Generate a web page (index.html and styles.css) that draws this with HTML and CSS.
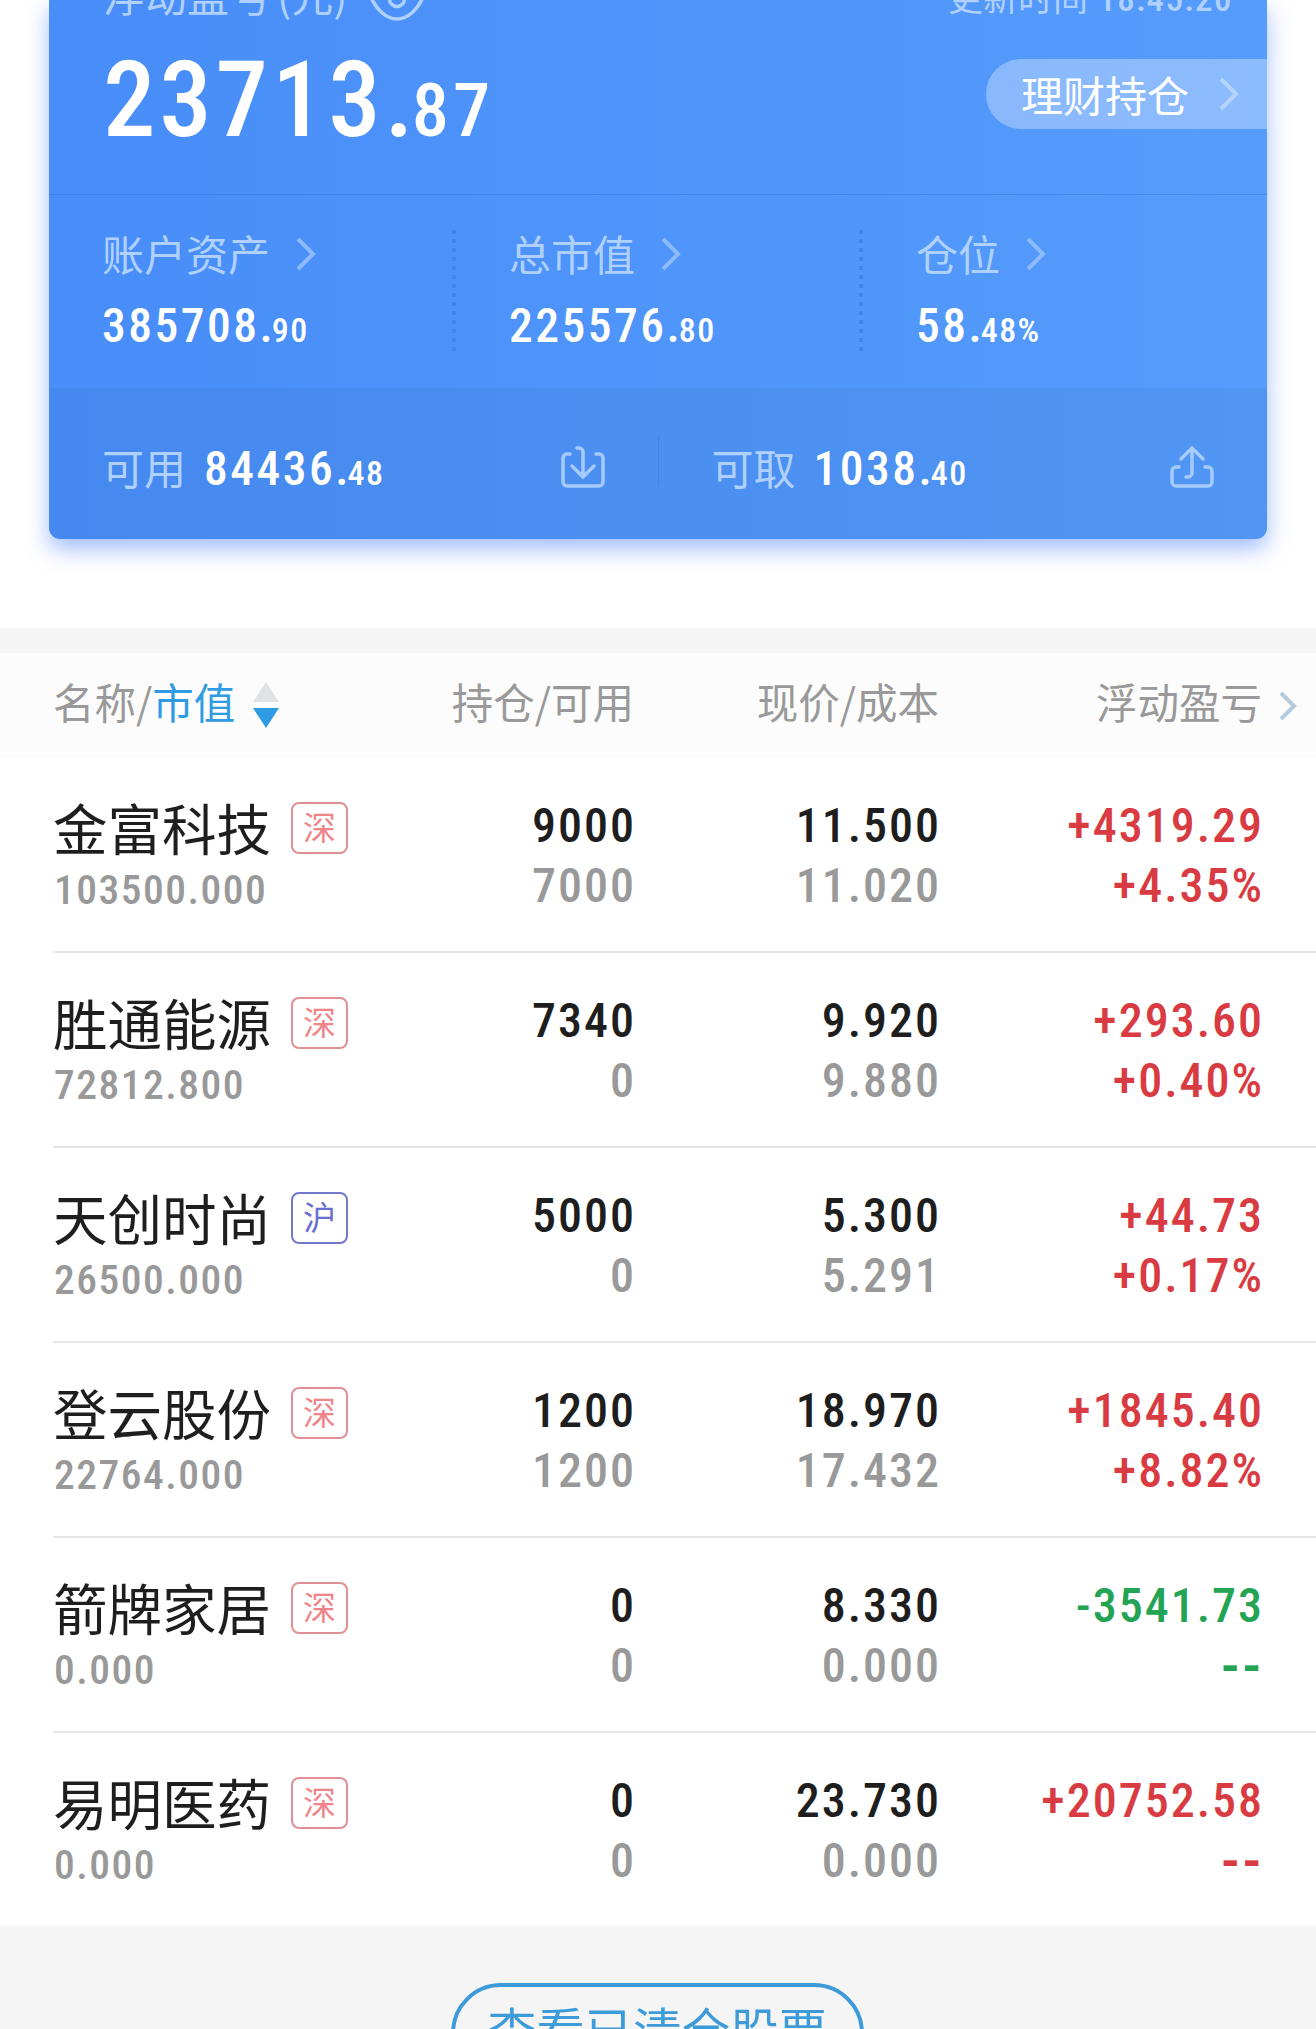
FILE: index.html
```
<!DOCTYPE html>
<html lang="zh-CN">
    <head>
        <meta charset="utf-8">
        <title>持仓</title>
        <link rel="stylesheet" href="styles.css">
    </head>
    <body>
        <div class="top">
            <div class="card">
                <div class="profit">
                    <div class="profit-left">
                        <div class="profit-title">
                            <span class="cn">浮动盈亏</span><span class="cn unit">(元)</span>
                            <svg class="eye" width="56" height="44" viewBox="0 0 56 44" fill="none" stroke="currentColor" stroke-width="3.5">
                                <path d="M2 20C7 9 17 2 28 2s21 7 26 18C49 32 39 42 28 42S7 32 2 20z"/>
                                <circle cx="28" cy="22" r="7.5"/>
                            </svg>
                        </div>
                        <div class="profit-num">23713<i>.</i><small>87</small></div>
                    </div>
                    <div class="profit-right">
                        <div class="time"><span class="cn">更新时间</span> <span class="clock">18:45:20</span></div>
                        <div class="pill cn">理财持仓
                            <svg class="arrow" width="20" height="34" viewBox="0 0 20 34"><path d="M2 2l15 15L2 32"/></svg>
                        </div>
                    </div>
                </div>
                <div class="assets">
                    <div class="asset">
                        <div class="asset-name cn">账户资产<svg class="arrow" width="20" height="34" viewBox="0 0 20 34"><path d="M2 2l15 15L2 32"/></svg></div>
                        <div class="num">385708<i>.</i><small>90</small></div>
                    </div>
                    <div class="dots"></div>
                    <div class="asset">
                        <div class="asset-name cn">总市值<svg class="arrow" width="20" height="34" viewBox="0 0 20 34"><path d="M2 2l15 15L2 32"/></svg></div>
                        <div class="num">225576<i>.</i><small>80</small></div>
                    </div>
                    <div class="dots"></div>
                    <div class="asset">
                        <div class="asset-name cn">仓位<svg class="arrow" width="20" height="34" viewBox="0 0 20 34"><path d="M2 2l15 15L2 32"/></svg></div>
                        <div class="num">58<i>.</i><small>48%</small></div>
                    </div>
                </div>
                <div class="cash">
                    <div class="cash-item">
                        <span class="cash-name cn">可用</span>
                        <span class="num">84436<i>.</i><small>48</small></span>
                        <svg class="io" width="44" height="42" viewBox="0 0 44 42">
                            <path d="M9 8H6a4 4 0 0 0-4 4v24a4 4 0 0 0 4 4h32a4 4 0 0 0 4-4V12a4 4 0 0 0-4-4h-3"/>
                            <path d="M16 2h2a4 4 0 0 1 4 4v24M11 20l11 11 11-11"/>
                        </svg>
                    </div>
                    <div class="line"></div>
                    <div class="cash-item">
                        <span class="cash-name cn">可取</span>
                        <span class="num">1038<i>.</i><small>40</small></span>
                        <svg class="io" width="44" height="42" viewBox="0 0 44 42">
                            <path d="M9 21H6a4 4 0 0 0-4 4v11a4 4 0 0 0 4 4h32a4 4 0 0 0 4-4V25a4 4 0 0 0-4-4h-3"/>
                            <path d="M16 31h2a4 4 0 0 0 4-4V3M11 13L22 2l11 11"/>
                        </svg>
                    </div>
                </div>
            </div>
        </div>

        <div class="thead cn">
            <div class="th-name">名称/<b>市值</b>
                <svg width="28" height="48" viewBox="0 0 28 48">
                    <path d="M14 1l13 20H1z" fill="#dfe3e6"/>
                    <path d="M14 47L1 27h26z" fill="#2f9be4"/>
                </svg>
            </div>
            <div>持仓/可用</div>
            <div>现价/成本</div>
            <div>浮动盈亏</div>
            <svg class="more" width="18" height="30" viewBox="0 0 18 30"><path d="M2 2l13 13L2 28"/></svg>
        </div>

        <div class="list">
            <div class="row">
                <div class="stock"><div class="name cn">金富科技<i class="tag">深</i></div><div class="value">103500.000</div></div>
                <div class="cell">9000<span>7000</span></div>
                <div class="cell">11.500<span>11.020</span></div>
                <div class="cell up">+4319.29<span>+4.35%</span></div>
            </div>
            <div class="row">
                <div class="stock"><div class="name cn">胜通能源<i class="tag">深</i></div><div class="value">72812.800</div></div>
                <div class="cell">7340<span>0</span></div>
                <div class="cell">9.920<span>9.880</span></div>
                <div class="cell up">+293.60<span>+0.40%</span></div>
            </div>
            <div class="row">
                <div class="stock"><div class="name cn">天创时尚<i class="tag hu">沪</i></div><div class="value">26500.000</div></div>
                <div class="cell">5000<span>0</span></div>
                <div class="cell">5.300<span>5.291</span></div>
                <div class="cell up">+44.73<span>+0.17%</span></div>
            </div>
            <div class="row">
                <div class="stock"><div class="name cn">登云股份<i class="tag">深</i></div><div class="value">22764.000</div></div>
                <div class="cell">1200<span>1200</span></div>
                <div class="cell">18.970<span>17.432</span></div>
                <div class="cell up">+1845.40<span>+8.82%</span></div>
            </div>
            <div class="row">
                <div class="stock"><div class="name cn">箭牌家居<i class="tag">深</i></div><div class="value">0.000</div></div>
                <div class="cell">0<span>0</span></div>
                <div class="cell">8.330<span>0.000</span></div>
                <div class="cell down">-3541.73<span class="none">--</span></div>
            </div>
            <div class="row">
                <div class="stock"><div class="name cn">易明医药<i class="tag">深</i></div><div class="value">0.000</div></div>
                <div class="cell">0<span>0</span></div>
                <div class="cell">23.730<span>0.000</span></div>
                <div class="cell up">+20752.58<span class="none">--</span></div>
            </div>
        </div>

        <div class="bottom">
            <div class="btn cn">查看已清仓股票</div>
        </div>
    </body>
</html>
```

FILE: styles.css
```
*{
    box-sizing: border-box;
}
html{
    overflow: hidden;
}
body{
    margin: 0;
    width: 1316px;
    height: 2029px;
    overflow: hidden;
    background-color: #fff;
    font-family: "Roboto Condensed", Roboto, sans-serif;
    font-weight: 500;
}
i{
    font-style: normal;
}
.cn{
    font-family: "Noto Sans CJK SC", sans-serif;
    font-weight: 400;
}
.top{
    height: 653px;
    padding: 0 49px;
    border-bottom: 25px solid #f5f5f5;
}
.card{
    height: 539px;
    color: #fff;
    background: linear-gradient(90deg, #488df8, #559cfc);
    border-radius: 0 0 11px 11px;
    box-shadow: 0 10px 22px rgba(70, 125, 250, 0.5);
}

/* floating profit */
.profit{
    display: flex;
    justify-content: space-between;
    height: 195px;
    border-bottom: 1px solid rgba(40, 100, 210, 0.3);
}
.profit-left{
    padding-left: 54px;
}
.profit-title{
    display: flex;
    align-items: center;
    height: 60px;
    margin-top: -36px;
    font-size: 42px;
    line-height: 60px;
    color: #b0d0fd;
}
.unit{
    margin-left: 6px;
}
.eye{
    margin: 9px 0 0 22px;
}
.profit-num{
    margin-top: 16px;
    font-size: 105px;
    line-height: 122px;
    letter-spacing: 3.8px;
}
.profit-num i{
    letter-spacing: -2px;
}
.profit-num small{
    font-size: 74.5px;
    letter-spacing: 4px;
}
.profit-right{
    display: flex;
    flex-direction: column;
    align-items: flex-end;
}
.time{
    margin: -29px 34px 0 0;
    height: 50px;
    line-height: 50px;
    font-size: 35px;
    color: #b0d0fd;
}
.clock{
    margin-left: 2px;
    letter-spacing: 1.5px;
}
.pill{
    display: flex;
    align-items: center;
    justify-content: space-between;
    width: 281px;
    height: 70px;
    margin-top: 38px;
    padding: 0 28px 0 35px;
    border-radius: 35px 0 0 35px;
    background-color: rgba(255, 255, 255, 0.32);
    font-size: 42px;
    line-height: 64px;
}
.arrow{
    fill: none;
    stroke: #8cbafc;
    stroke-width: 4;
}
.pill .arrow{
    stroke: #b5d3fd;
}

/* assets */
.assets{
    display: flex;
    height: 193px;
    padding-top: 35px;
}
.asset{
    width: 403px;
    padding-left: 53px;
}
.asset-name{
    display: flex;
    align-items: center;
    gap: 26px;
    height: 46px;
    font-size: 42px;
    line-height: 42px;
    color: #b0d0fd;
}
.asset-name .arrow{
    margin-top: 2px;
}
.num{
    font-size: 47.5px;
    line-height: 60px;
    letter-spacing: 2.5px;
}
.num i{
    letter-spacing: -1px;
}
.num small{
    font-size: 34px;
    letter-spacing: 1.4px;
}
.asset .num{
    margin-top: 20px;
}
.dots{
    flex: none;
    width: 4px;
    height: 121px;
    background: repeating-linear-gradient(#4384e6 0 4px, transparent 4px 9px);
}

/* cash */
.cash{
    display: flex;
    align-items: center;
    height: 151px;
    padding-bottom: 5px;
    background-color: rgba(60, 110, 190, 0.14);
    border-radius: 0 0 11px 11px;
}
.cash-item{
    display: flex;
    align-items: center;
    flex: 1;
    padding: 12px 53px 0 53px;
}
.cash-item .num{
    padding-top: 8px;
}
.cash-name{
    width: 102px;
    font-size: 42px;
    line-height: 54px;
    color: #b0d0fd;
}
.line{
    width: 1px;
    height: 50px;
    background-color: rgba(40, 100, 210, 0.25);
}
.io{
    margin-left: auto;
    fill: none;
    stroke: #a6cafc;
    stroke-width: 3.5;
    stroke-linecap: round;
}

/* table */
.thead, .row{
    display: grid;
    grid-template-columns: 350px 231px 305px 323px 1fr;
}
.thead{
    height: 105px;
    padding-left: 53px;
    background-color: #fcfcfc;
    color: #999;
    font-size: 41.5px;
    line-height: 97px;
    text-align: right;
}
.th-name{
    display: flex;
    align-items: center;
    height: 97px;
    text-align: left;
}
.th-name b{
    font-weight: 400;
    color: #2f9be4;
}
.th-name svg{
    margin: 7px 0 0 17px;
}
.more{
    align-self: center;
    margin-left: 17px;
    fill: none;
    stroke: #b4cbdd;
    stroke-width: 4;
}
.list{
    margin-left: 53px;
}
.row{
    height: 195px;
    border-bottom: 2px solid #e6e6e6;
}
.row:last-child{
    height: 193px;
    border-bottom: none;
}
.stock{
    padding-top: 36px;
}
.name{
    display: flex;
    align-items: center;
    height: 66px;
    font-size: 54.5px;
    line-height: 66px;
    color: #1e1e1e;
}
.tag{
    width: 57px;
    height: 52px;
    margin: 2px 0 0 20px;
    border: 2px solid #e08f92;
    border-radius: 8px;
    font-size: 33px;
    line-height: 44px;
    text-align: center;
    color: #f08589;
}
.hu{
    border-color: #7478cc;
    color: #6a6ed0;
}
.value{
    margin-top: 5px;
    padding-left: 1px;
    font-size: 41.5px;
    line-height: 50px;
    letter-spacing: 1.5px;
    color: #999;
    font-weight: 500;
}
.cell{
    margin-right: -2px;
    padding-top: 38px;
    font-size: 48px;
    line-height: 60px;
    letter-spacing: 2px;
    text-align: right;
    color: #1e1e1e;
}
.cell span{
    display: block;
    color: #999;
}
.up, .up span{
    color: #d93b42;
}
.down, .down span{
    color: #23a455;
}
.cell .none{
    font-size: 60px;
    letter-spacing: 3px;
}

.bottom{
    height: 103px;
    padding-top: 57px;
    background-color: #f5f5f5;
}
.btn{
    width: 413px;
    height: 100px;
    margin-left: 451px;
    border: 4px solid #3e9bd9;
    border-radius: 50px;
    font-size: 48.5px;
    line-height: 82px;
    text-align: center;
    color: #3e9bd9;
}
```
